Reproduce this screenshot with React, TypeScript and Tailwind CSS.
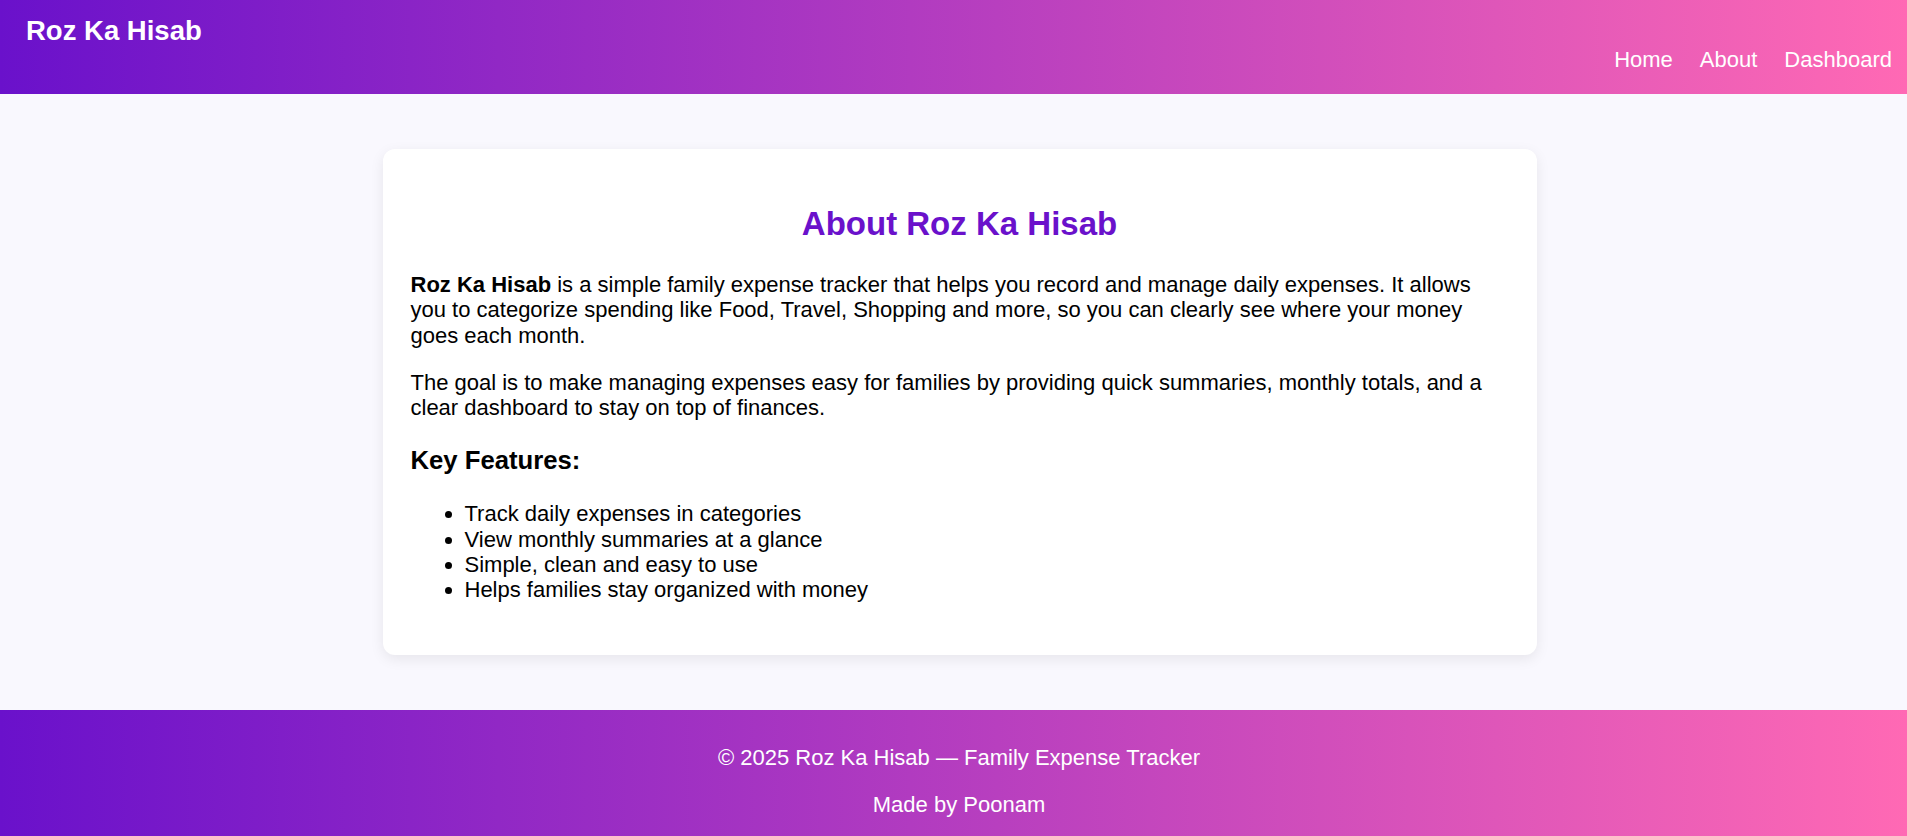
import React from 'react';

const features = [
  'Track daily expenses in categories',
  'View monthly summaries at a glance',
  'Simple, clean and easy to use',
  'Helps families stay organized with money',
];

const Header: React.FC = () => (
  <header className="flex h-[94px] items-start justify-between bg-[linear-gradient(90deg,#6a11cb,#ff69b4)] pl-[26px] pr-[15px] pt-[15px] text-white">
    <h1 className="text-[27.5px] font-bold leading-[1.15]">Roz Ka Hisab</h1>
    <nav className="mt-[32px] flex gap-[27px] text-[22px] leading-[1.15]">
      <a href="#" className="text-white no-underline">Home</a>
      <a href="#" className="text-white no-underline">About</a>
      <a href="#" className="text-white no-underline">Dashboard</a>
    </nav>
  </header>
);

const AboutCard: React.FC = () => (
  <section className="w-[1154px] rounded-[12px] bg-white px-[28px] pb-[30px] pt-[29px] text-black shadow-[0_4px_14px_rgba(0,0,0,0.08)]">
    <h2 className="mb-[29px] mt-[27px] text-center text-[33px] font-bold leading-[1.15] text-[#6a11cb]">
      About Roz Ka Hisab
    </h2>
    <p className="text-[22px] leading-[1.15]">
      <strong className="font-bold">Roz Ka Hisab</strong> is a simple family expense tracker that helps you record and
      manage daily expenses. It allows you to categorize spending like Food, Travel, Shopping and more, so you can
      clearly see where your money goes each month.
    </p>
    <p className="mt-[22px] text-[22px] leading-[1.15]">
      The goal is to make managing expenses easy for families by providing quick summaries, monthly totals, and a clear
      dashboard to stay on top of finances.
    </p>
    <h3 className="mt-[25.7px] text-[25.7px] font-bold leading-[1.15]">Key Features:</h3>
    <ul className="mb-[22px] mt-[25.7px] list-disc pl-[54px] text-[22px] leading-[1.15]">
      {features.map((f) => (
        <li key={f}>{f}</li>
      ))}
    </ul>
  </section>
);

const Footer: React.FC = () => (
  <footer className="bg-[linear-gradient(90deg,#6a11cb,#ff69b4)] py-[13px] pl-[11px] text-center text-[22px] leading-[1.15] text-white">
    <p className="my-[22px]">© 2025 Roz Ka Hisab — Family Expense Tracker</p>
    <p className="my-[22px]">Made by Poonam</p>
  </footer>
);

export default function App() {
  return (
    <div className="min-h-screen bg-[#f9f8fe] font-['Liberation_Sans',Arial,sans-serif]">
      <Header />
      <main className="flex justify-center py-[55px] pl-[12px]">
        <AboutCard />
      </main>
      <Footer />
    </div>
  );
}
